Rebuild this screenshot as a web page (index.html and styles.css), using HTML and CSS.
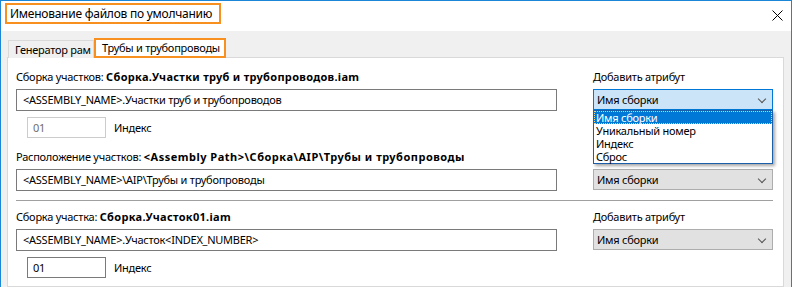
FILE: index.html
```html
<!DOCTYPE html>
<html lang="ru">
<head>
  <meta charset="UTF-8" />
  <title>Именование файлов по умолчанию</title>
  <link rel="stylesheet" href="styles.css">
</head>
<body>
  <div class="window">
    <div class="titlebar">
      <div class="title">Именование файлов по умолчанию</div>
      <svg class="close" width="11" height="11" viewBox="0 0 11 11">
        <path d="M0.5 0.5 L10.5 10.5 M10.5 0.5 L0.5 10.5" stroke="#000" stroke-width="1" fill="none"/>
      </svg>
    </div>

    <div class="client">
      <div class="tabs">
        <div class="tab">Генератор рам</div>
        <div class="tab active">Трубы и трубопроводы</div>
      </div>

      <div class="panel">
        <!-- Сборка участков -->
        <div class="row">
          <div class="label">Сборка участков: <b>Сборка.Участки труб и трубопроводов.iam</b></div>
          <div class="label">Добавить атрибут</div>
        </div>
        <div class="row gap-top">
          <div class="field">&lt;ASSEMBLY_NAME&gt;.Участки труб и трубопроводов</div>
          <div class="combo-wrap">
            <div class="combo focused">Имя сборки<span class="arrow"></span></div>
            <ul class="dropdown">
              <li class="selected">Имя сборки</li>
              <li>Уникальный номер</li>
              <li>Индекс</li>
              <li>Сброс</li>
            </ul>
          </div>
        </div>
        <div class="index disabled">
          <div class="field small">01</div>
          <span>Индекс</span>
        </div>

        <!-- Расположение участков -->
        <div class="row label-row">
          <div class="label">Расположение участков: <b class="path">&lt;Assembly Path&gt;\Сборка\AIP\Трубы и трубопроводы</b></div>
        </div>
        <div class="row gap-top">
          <div class="field">&lt;ASSEMBLY_NAME&gt;\AIP\Трубы и трубопроводы</div>
          <div class="combo">Имя сборки<span class="arrow"></span></div>
        </div>

        <div class="separator"></div>

        <!-- Сборка участка -->
        <div class="row">
          <div class="label">Сборка участка: <b>Сборка.Участок01.iam</b></div>
          <div class="label">Добавить атрибут</div>
        </div>
        <div class="row gap-top">
          <div class="field">&lt;ASSEMBLY_NAME&gt;.Участок&lt;INDEX_NUMBER&gt;</div>
          <div class="combo">Имя сборки<span class="arrow"></span></div>
        </div>
        <div class="index">
          <div class="field small">01</div>
          <span>Индекс</span>
        </div>
      </div>
    </div>
  </div>
</body>
</html>
```

FILE: styles.css
```css
body {
  margin: 0;
  font-family: "Noto Sans", Arial, sans-serif;
  font-size: 11px;
  letter-spacing: -0.25px;
  color: #000;
  background: #fff;
}

b {
  letter-spacing: 0.3px;
}

b.path {
  letter-spacing: 0.5px;
}

.window {
  width: 790px;
  height: 286px;
  border: 1px solid #1c86d6;
  border-bottom: none;
  overflow: hidden;
  display: flex;
  flex-direction: column;
}

.titlebar {
  height: 30px;
  flex: none;
  display: flex;
  align-items: flex-start;
  justify-content: space-between;
  padding: 2px 8px 0 4px;
  box-sizing: border-box;
  background: #fff;
}

.title {
  font-size: 12px;
  letter-spacing: -0.25px;
  line-height: 17px;
  padding: 0 7px 0 3px;
  border: 2px solid #f7901e;
}

.close {
  margin-top: 7px;
}

.client {
  flex: 1;
  background: #f0f0f0;
  padding: 7px 7px 0 6px;
  display: flex;
  flex-direction: column;
}

.tabs {
  display: flex;
  align-items: flex-end;
  height: 20px;
  margin-left: 1px;
  margin-bottom: -1px;
  position: relative;
  z-index: 1;
}

.tab {
  width: 78px;
  height: 17px;
  line-height: 17px;
  padding: 0 0 0 6px;
  white-space: nowrap;
  border: 1px solid #d9d9d9;
  border-bottom: none;
  background: #f0f0f0;
}

.tab.active {
  width: 122px;
  height: 16px;
  line-height: 16px;
  padding: 0 0 0 6px;
  border: 2px solid #f7901e;
  background: #fff;
}

.panel {
  flex: 1;
  background: #fff;
  border: 1px solid #d9d9d9;
  padding: 11px 10px 0 8px;
}

.row {
  display: grid;
  grid-template-columns: 541px 180px;
  column-gap: 36px;
  align-items: start;
}

.label {
  line-height: 16px;
  white-space: nowrap;
}

.gap-top {
  margin-top: 4px;
}

.label-row {
  margin-top: 11px;
}

.field {
  height: 20px;
  line-height: 20px;
  border: 1px solid #7a7a7a;
  padding: 0 6px;
  white-space: nowrap;
}

.combo-wrap {
  position: relative;
}

.combo {
  position: relative;
  height: 19px;
  line-height: 19px;
  padding: 0 3px;
  background: #e1e1e1;
  border: 1px solid #adadad;
}

.combo.focused {
  background: #cce4f7;
  border-color: #0078d7;
}

.arrow {
  position: absolute;
  right: 7px;
  top: 6px;
  width: 5px;
  height: 5px;
  border-right: 1px solid #555;
  border-bottom: 1px solid #555;
  transform: rotate(45deg);
}

.dropdown {
  position: absolute;
  left: 0;
  right: 0;
  top: 21px;
  margin: 0;
  padding: 0;
  list-style: none;
  background: #fff;
  border: 1px solid #1d5ea8;
  box-shadow: 2px 2px 3px rgba(0, 0, 0, 0.35);
  z-index: 2;
}

.dropdown li {
  height: 13px;
  line-height: 13px;
  padding: 0 2px;
}

.dropdown li.selected {
  background: #0078d7;
  color: #fff;
  outline: 1px dotted #f5d77a;
  outline-offset: -1px;
}

.index {
  display: flex;
  align-items: center;
  gap: 8px;
  margin: 6px 0 0 11px;
}

.field.small {
  width: 66px;
  height: 19px;
  line-height: 19px;
  padding: 0 6px 0 5px;
}

.index.disabled .field {
  border-color: #cccccc;
  color: #6d6d6d;
}

.separator {
  height: 1px;
  background: #a0a0a0;
  margin: 9px 0 8px;
  width: 757px;
}
```
